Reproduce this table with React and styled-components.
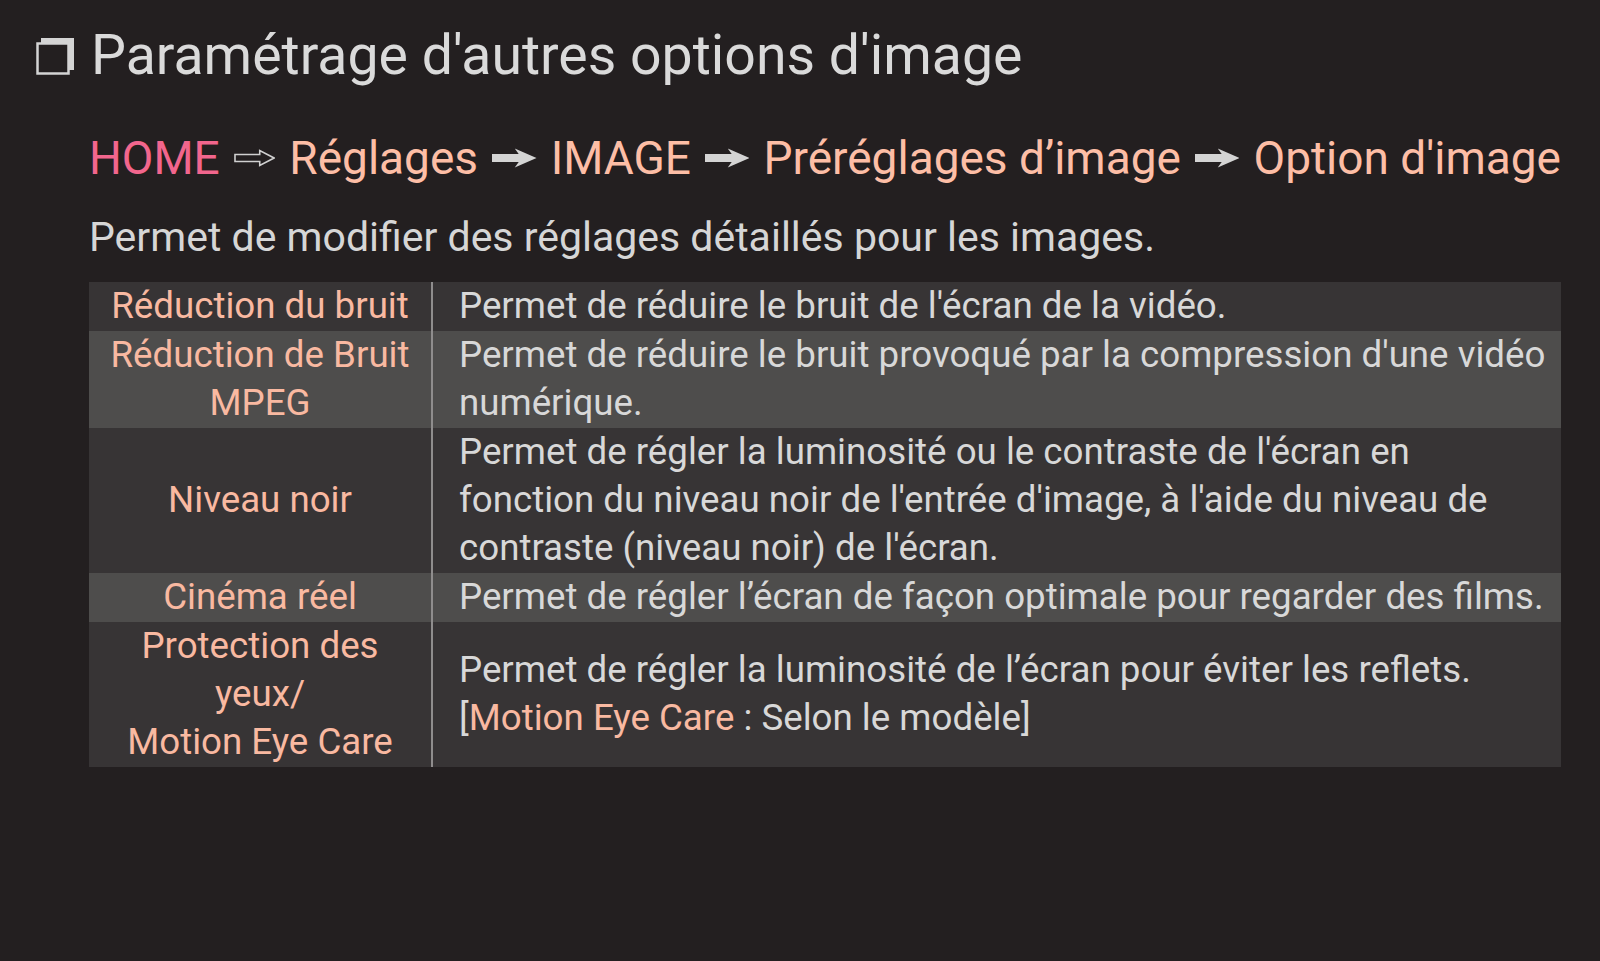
import React from "react";
import styled, { createGlobalStyle } from "styled-components";

const GlobalStyle = createGlobalStyle`
  html, body { margin: 0; padding: 0; background: #231f20; }
  body { font-family: Roboto, "Liberation Sans", sans-serif; }
  #root { min-height: 961px; background: #231f20; }
`;

const Page = styled.div`
  padding: 24px 39px 0 36px;
  color: #d9d9d9;
`;

const TitleRow = styled.h1`
  margin: 0;
  display: flex;
  align-items: center;
  gap: 15px;
  font-size: 55.4px;
  font-weight: 400;
  line-height: 64px;
  color: #dadada;
  white-space: nowrap;
`;

const Body = styled.div`
  margin-left: 53px;
  display: flex;
  flex-direction: column;
`;

const Crumbs = styled.div`
  margin-top: 43px;
  display: flex;
  align-items: center;
  gap: 14px;
  font-size: 46px;
  line-height: 54px;
  white-space: nowrap;
`;

const Crumb = styled.span`
  color: ${(p) => (p.$home ? "#f2668d" : "#fdbea6")};
`;

const Intro = styled.p`
  margin: 28px 0 0;
  font-size: 41px;
  line-height: 48px;
  color: #d6d6d6;
  white-space: nowrap;
`;

const Table = styled.div`
  margin-top: 21px;
  display: flex;
  flex-direction: column;
`;

const Row = styled.div`
  display: grid;
  grid-template-columns: 344px 1fr;
  background: ${(p) => (p.$light ? "#4e4d4c" : "#373435")};
  font-size: 36.7px;
  line-height: 48px;
`;

const Name = styled.div`
  box-sizing: border-box;
  border-right: 2px solid #8f8d8d;
  padding-bottom: 1px;
  display: flex;
  align-items: center;
  justify-content: center;
  text-align: center;
  color: #f9b9a1;
  white-space: nowrap;
`;

const Desc = styled.div`
  padding: 0 6px 1px 26px;
  display: flex;
  flex-direction: column;
  justify-content: center;
  color: #d8d8d8;
  white-space: nowrap;
`;

const Accent = styled.span`
  color: #f9b9a1;
`;

const TitleIcon = () => (
  <svg width="40" height="40" viewBox="0 0 40 40" aria-hidden="true">
    <rect x="5" y="2" width="33" height="32" fill="#d4d4d4" />
    <rect x="1.5" y="7.5" width="31" height="30" fill="#231f20" stroke="#d4d4d4" strokeWidth="2.5" />
  </svg>
);

const OutlineArrow = () => (
  <svg width="42" height="18" viewBox="0 0 42 18" aria-hidden="true">
    <path d="M1 5.5 H26 V1.5 L40.5 9 L26 16.5 V12.5 H1 Z" fill="none" stroke="#d0d0d0" strokeWidth="1.6" strokeLinejoin="miter" />
  </svg>
);

const SolidArrow = () => (
  <svg width="45" height="20" viewBox="0 0 45 20" aria-hidden="true">
    <polygon points="0,6 27,6 23,0.5 45,10 23,19.5 27,14 0,14" fill="#d4d4d4" />
  </svg>
);

const rows = [
  {
    name: ["Réduction du bruit"],
    desc: [["Permet de réduire le bruit de l'écran de la vidéo."]],
  },
  {
    light: true,
    name: ["Réduction de Bruit", "MPEG"],
    desc: [
      ["Permet de réduire le bruit provoqué par la compression d'une vidéo"],
      ["numérique."],
    ],
  },
  {
    name: ["Niveau noir"],
    desc: [
      ["Permet de régler la luminosité ou le contraste de l'écran en"],
      ["fonction du niveau noir de l'entrée d'image, à l'aide du niveau de"],
      ["contraste (niveau noir) de l'écran."],
    ],
  },
  {
    light: true,
    name: ["Cinéma réel"],
    desc: [["Permet de régler l’écran de façon optimale pour regarder des films."]],
  },
  {
    name: ["Protection des", "yeux/", "Motion Eye Care"],
    desc: [
      ["Permet de régler la luminosité de l’écran pour éviter les reflets."],
      ["[", <Accent key="a">Motion Eye Care</Accent>, " : Selon le modèle]"],
    ],
  },
];

export default function App() {
  return (
    <>
      <GlobalStyle />
      <Page>
        <TitleRow>
          <TitleIcon />
          <span>Paramétrage d'autres options d'image</span>
        </TitleRow>
        <Body>
          <Crumbs>
            <Crumb $home>HOME</Crumb>
            <OutlineArrow />
            <Crumb>Réglages</Crumb>
            <SolidArrow />
            <Crumb>IMAGE</Crumb>
            <SolidArrow />
            <Crumb>Préréglages d’image</Crumb>
            <SolidArrow />
            <Crumb>Option d'image</Crumb>
          </Crumbs>
          <Intro>Permet de modifier des réglages détaillés pour les images.</Intro>
          <Table>
            {rows.map((r, i) => (
              <Row key={i} $light={r.light}>
                <Name>
                  <div>
                    {r.name.map((l, j) => (
                      <div key={j}>{l}</div>
                    ))}
                  </div>
                </Name>
                <Desc>
                  {r.desc.map((l, j) => (
                    <div key={j}>{l}</div>
                  ))}
                </Desc>
              </Row>
            ))}
          </Table>
        </Body>
      </Page>
    </>
  );
}
